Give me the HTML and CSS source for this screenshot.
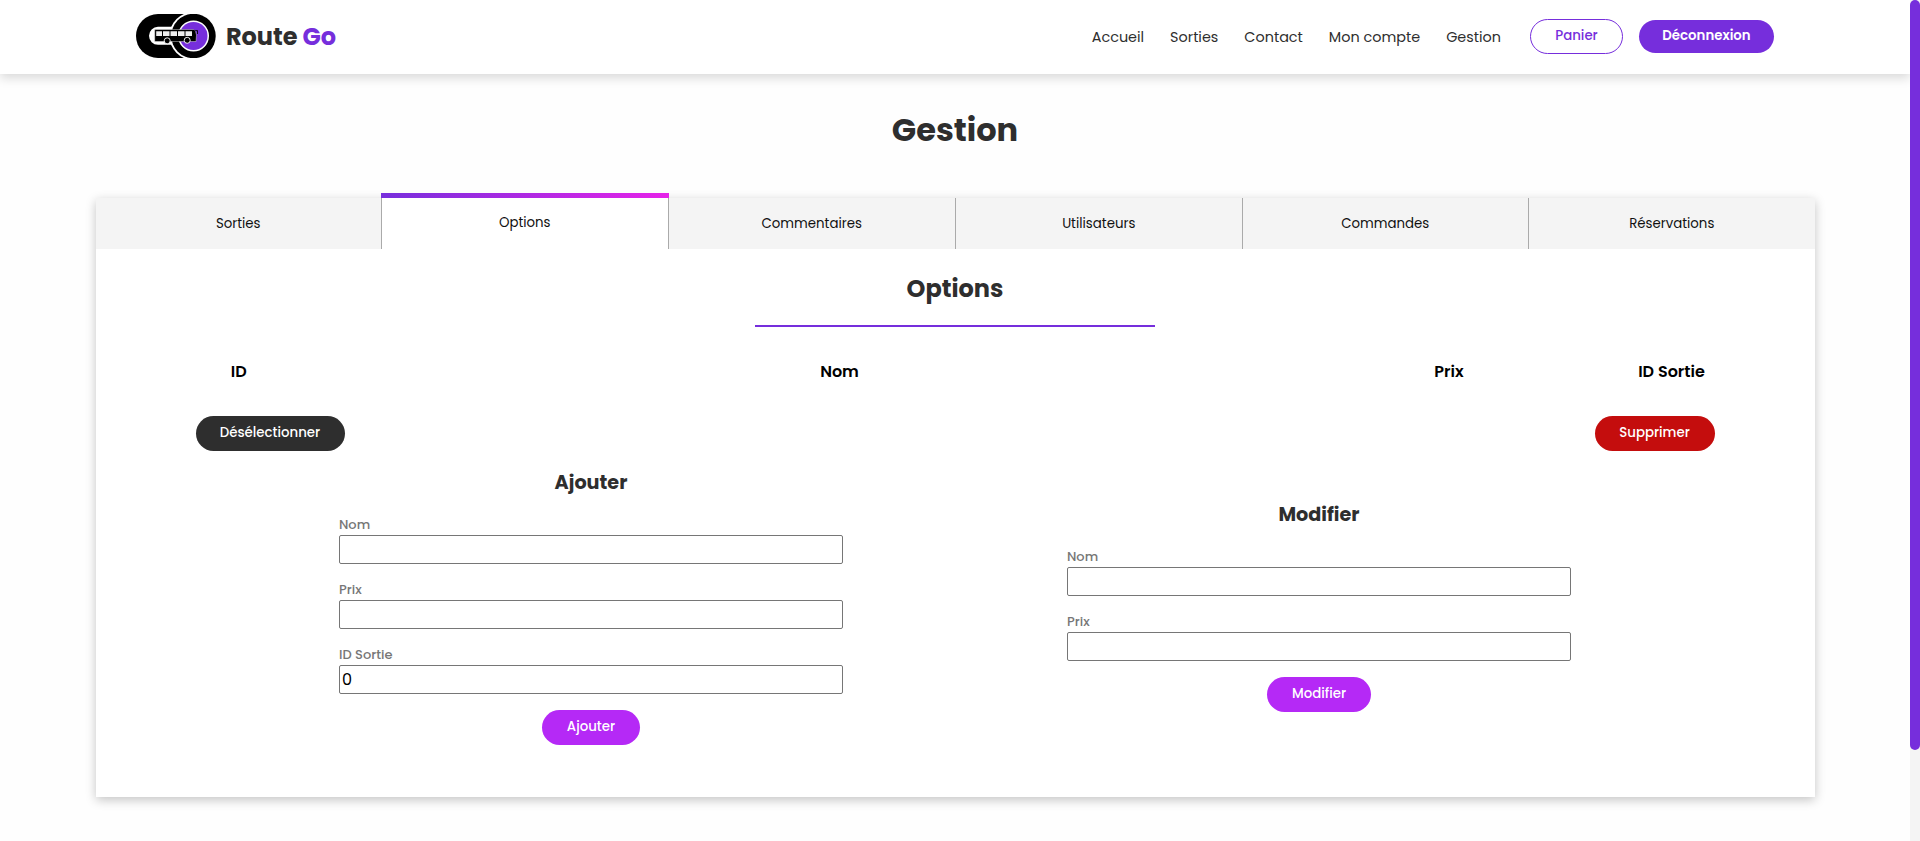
FILE: index.html
```html
<!DOCTYPE html>
<html lang="fr">
<head>
<meta charset="utf-8">
<title>Route Go - Gestion</title>
<link rel="stylesheet" href="styles.css">
</head>
<body>
<div class="page">
  <header class="header">
    <a class="brand">
      <svg class="logo" viewBox="0 0 80 44" width="80" height="44" aria-hidden="true">
        <path d="M22 0H58V44H22A22 22 0 0 1 22 0Z" fill="#000"/>
        <path d="M44 12.800H22A8.900 8.900 0 0 0 22 30.800H40" fill="#fff"/>
        <circle cx="57.500" cy="22" r="24" fill="#fff"/>
        <circle cx="57.500" cy="22" r="22.200" fill="#000"/>
        <circle cx="57.500" cy="22" r="15.500" fill="#fff"/>
        <circle cx="57.500" cy="22" r="14" fill="#762edc"/>
        <path d="M18.700 15.500H57.500Q59.800 16 60.500 21L60 27.500H18.700Z" fill="#000" stroke="#fff" stroke-width=".4"/>
        <path d="M20.200 17.300h5.800v4.700h-5.800zM27 17.300h6.500v4.700h-6.500zM34.500 17.300h6.500v4.700h-6.500zM42 17.300h6.500v4.700h-6.500zM49.500 17.300h6.500v4.700h-6.500z" fill="#eee"/>
        <circle cx="31.200" cy="26.800" r="3" fill="#000" stroke="#fff" stroke-width=".9"/>
        <circle cx="51.200" cy="26.300" r="3" fill="#000" stroke="#fff" stroke-width=".9"/>
        <path d="M58 17l3.500-.5v3.500" fill="none" stroke="#000" stroke-width=".9"/>
      </svg>
      <span class="brand-name">Route <span class="accent">Go</span></span>
    </a>
    <nav class="nav">
      <a class="nav-link">Accueil</a>
      <a class="nav-link">Sorties</a>
      <a class="nav-link">Contact</a>
      <a class="nav-link">Mon compte</a>
      <a class="nav-link">Gestion</a>
      <a class="btn outline">Panier</a>
      <a class="btn logout">Déconnexion</a>
    </nav>
  </header>
  <main>
    <h1 class="title">Gestion</h1>
    <section class="card">
      <div class="tabs">
        <div class="tab">Sorties</div>
        <div class="tab active">Options</div>
        <div class="tab">Commentaires</div>
        <div class="tab">Utilisateurs</div>
        <div class="tab">Commandes</div>
        <div class="tab">Réservations</div>
      </div>
      <h2 class="subtitle">Options</h2>
      <div class="columns"><span>ID</span><span>Nom</span><span>Prix</span><span>ID Sortie</span></div>
      <div class="actions"><button class="btn dark">Désélectionner</button><button class="btn red">Supprimer</button></div>
      <div class="forms">
        <form class="form">
          <h3 class="form-title">Ajouter</h3>
          <label class="field">Nom<input type="text"></label>
          <label class="field">Prix<input type="text"></label>
          <label class="field">ID Sortie<input type="text" value="0"></label>
          <button class="btn pink add" type="button">Ajouter</button>
        </form>
        <form class="form edit">
          <h3 class="form-title">Modifier</h3>
          <label class="field">Nom<input type="text"></label>
          <label class="field">Prix<input type="text"></label>
          <button class="btn pink change" type="button">Modifier</button>
        </form>
      </div>
    </section>
  </main>
</div>
<div class="scrollbar"><div class="thumb"></div></div>
</body>
</html>
```
FILE: styles.css
```css
* { box-sizing: border-box; margin: 0; padding: 0; }
body { display: flex; height: 841px; overflow: hidden; background: #fefefe; color: #2e2e2e; font-family: Poppins, Inter, "Liberation Sans", sans-serif; }
.page { flex: 1; min-width: 0; }
.header { display: flex; justify-content: space-between; align-items: center; height: 74px; padding: 0 136px 1px; background: #fff; box-shadow: 0 4px 10px rgba(0, 0, 0, .15); }
.brand { display: flex; align-items: center; gap: 10px; }
.logo { display: block; margin-bottom: 2px; }
.brand-name { font-size: 24px; font-weight: 700; letter-spacing: -.05px; }
.accent { color: #762edc; }
.nav { display: flex; align-items: center; font-size: 14.400px; }
.nav-link { margin-right: 26px; padding-top: 2px; }
.btn { display: flex; align-items: center; justify-content: center; height: 35px; padding-bottom: 2px; border: 0; border-radius: 18px; color: #fff; font: 500 13.333px Poppins, Inter, sans-serif; }
.outline { width: 93px; margin: 0 16px 0 3px; border: 1px solid #762edc; color: #762edc; }
.logout { width: 135px; height: 33px; background: #762edc; font-weight: 600; }
.title { padding-top: 32px; height: 124px; text-align: center; font-size: 32px; font-weight: 700; line-height: 48px; }
.card { width: 1719px; height: 599px; margin: 0 auto; background: #fff; box-shadow: 0 3px 10px rgba(0, 0, 0, .23); }
.tabs { display: grid; grid-template-columns: repeat(6, 1fr); height: 51px; }
.tab { display: flex; align-items: center; justify-content: center; background: #f4f4f4; border-right: 1px solid #aaa; font-size: 13.333px; color: #111; }
.tab:nth-child(n + 3) { border-right: 0; }
.tab:nth-child(n + 4) { border-left: 1px solid #aaa; }
.active { position: relative; background: #fff; padding-bottom: 2px; }
.active::before { content: ""; position: absolute; left: -1px; right: -1px; top: -5px; height: 5px; background: linear-gradient(90deg, #762edc, #e622e9); }
.subtitle { width: 400px; height: 78px; margin: 0 auto; padding-top: 22px; border-bottom: 2px solid #762edc; text-align: center; font-size: 24px; font-weight: 700; line-height: 36px; }
.columns { display: grid; grid-template-columns: 286.500px 915px 304px 141px; justify-items: center; align-items: center; height: 89px; color: #000; font-size: 16px; font-weight: 600; }
.actions { display: flex; justify-content: space-between; padding: 0 100px; }
.dark { width: 149px; background: #2e2e2e; }
.red { width: 120px; background: #c40d0d; }
.forms { display: grid; grid-template-columns: 504px 504px; column-gap: 224px; justify-content: center; align-items: start; padding-top: 17px; }
.form { display: flex; flex-direction: column; align-items: center; }
.edit { padding-top: 32px; }
.form-title { height: 47px; font-size: 19.200px; font-weight: 700; line-height: 30px; }
.field { display: flex; flex-direction: column; align-items: flex-start; width: 100%; margin-bottom: 16px; color: #777; font-size: 13px; font-weight: 500; line-height: 20px; }
.field input { width: 504px; height: 29px; padding: 1px 2px; border: 1px solid #767676; border-radius: 2px; background: #fff; color: #000; font: 16px Poppins, Inter, sans-serif; }
.pink { background: #b529f6; }
.add { width: 98px; }
.change { width: 104px; padding-bottom: 1px; }
.scrollbar { width: 10px; background: #f4f4f4; }
.thumb { height: 750px; border-radius: 5px; background: #762edc; }
```
